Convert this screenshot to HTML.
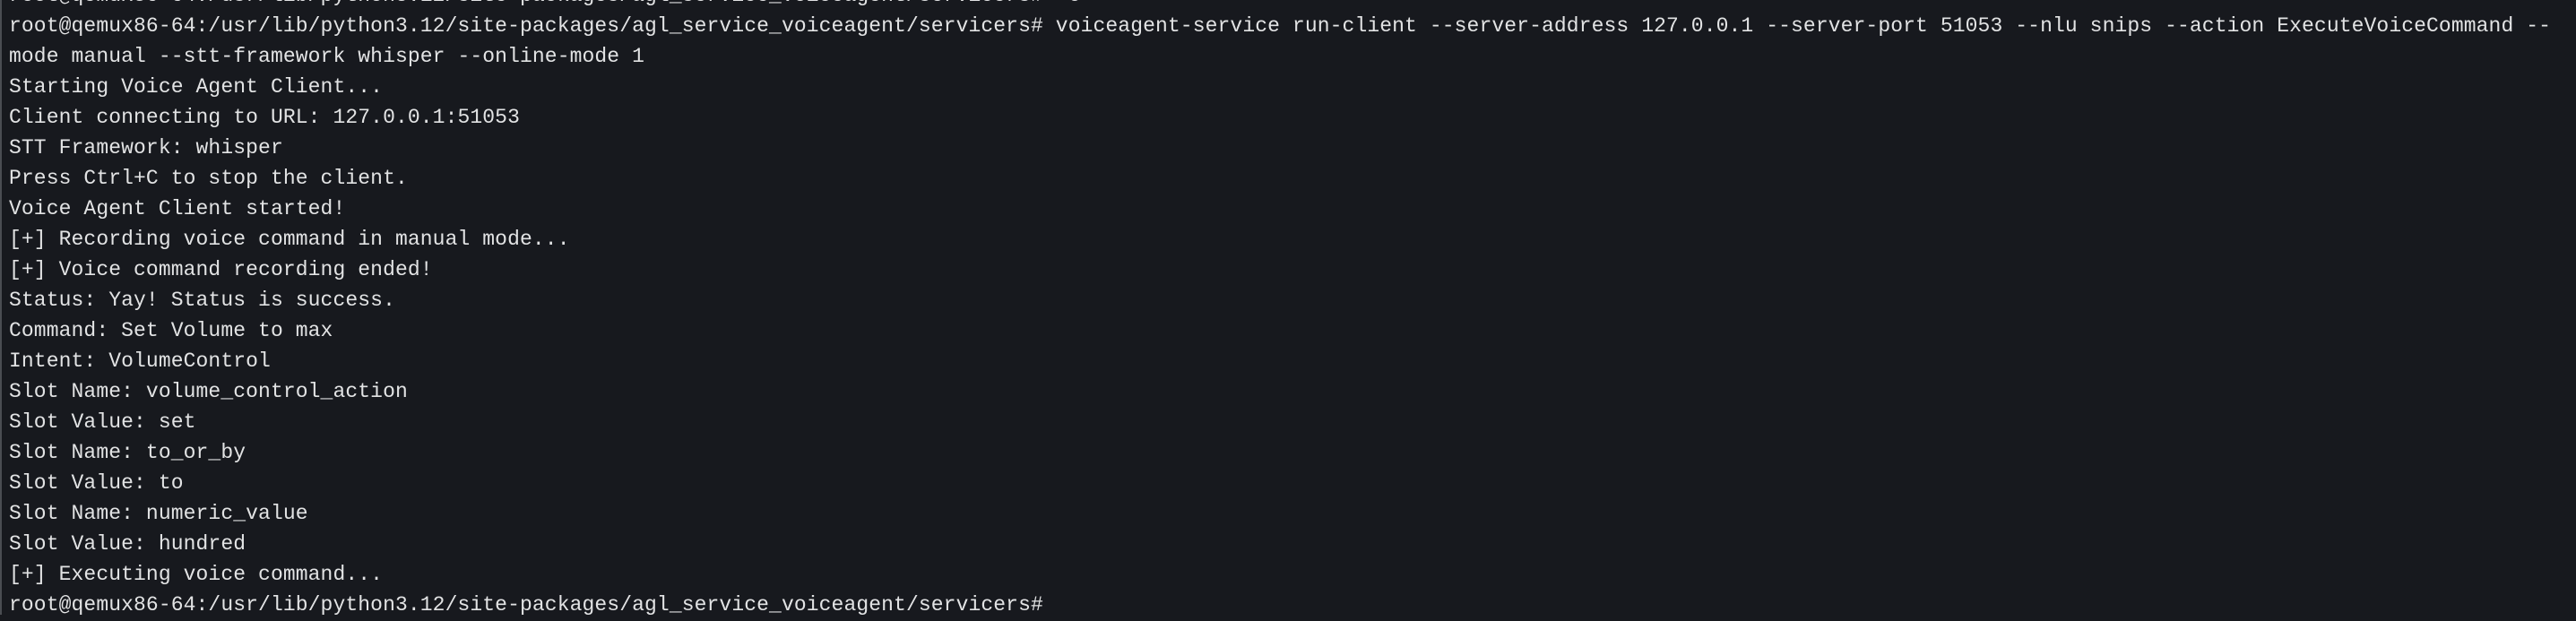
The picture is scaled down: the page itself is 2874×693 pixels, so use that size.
<!DOCTYPE html>
<html><head><meta charset="utf-8"><style>
html,body{margin:0;padding:0;}
body{width:2874px;height:686px;overflow:hidden;background:#17191e;position:relative;}
.l{position:absolute;left:0;top:0;width:2px;height:686px;background:#4a4d52;}
pre{position:absolute;left:10px;top:-21px;margin:0;font-family:"Liberation Mono","DejaVu Sans Mono",monospace;font-size:23px;line-height:33.98px;color:#e2e3e4;white-space:pre;letter-spacing:0.1px;}
</style></head><body><div class="l"></div>
<pre>root@qemux86-64:/usr/lib/python3.12/site-packages/agl_service_voiceagent/servicers# ^C
root@qemux86-64:/usr/lib/python3.12/site-packages/agl_service_voiceagent/servicers# voiceagent-service run-client --server-address 127.0.0.1 --server-port 51053 --nlu snips --action ExecuteVoiceCommand --
mode manual --stt-framework whisper --online-mode 1
Starting Voice Agent Client...
Client connecting to URL: 127.0.0.1:51053
STT Framework: whisper
Press Ctrl+C to stop the client.
Voice Agent Client started!
[+] Recording voice command in manual mode...
[+] Voice command recording ended!
Status: Yay! Status is success.
Command: Set Volume to max
Intent: VolumeControl
Slot Name: volume_control_action
Slot Value: set
Slot Name: to_or_by
Slot Value: to
Slot Name: numeric_value
Slot Value: hundred
[+] Executing voice command...
root@qemux86-64:/usr/lib/python3.12/site-packages/agl_service_voiceagent/servicers# </pre>
</body></html>
